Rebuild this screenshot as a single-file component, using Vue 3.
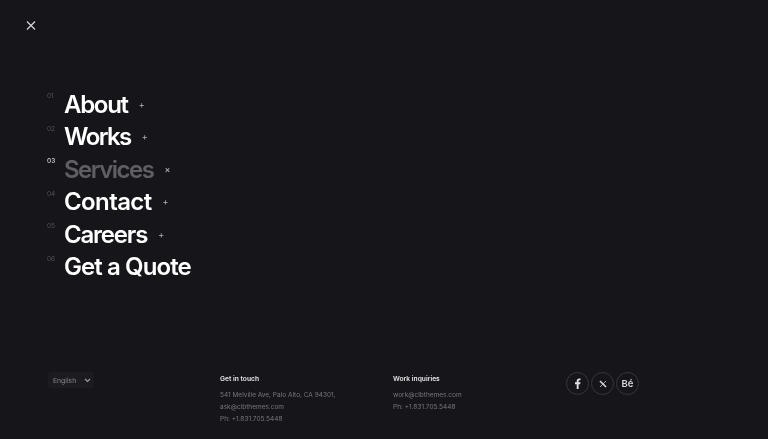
<script setup>
// track: the reference face is narrower on some words, so tracking differs per item
const menu = [
  { no: '01', label: 'About', mark: '+', track: -1.3 },
  { no: '02', label: 'Works', mark: '+', track: -1.6 },
  { no: '03', label: 'Services', mark: '×', active: true, track: -1.5 },
  { no: '04', label: 'Contact', mark: '+', track: -0.6 },
  { no: '05', label: 'Careers', mark: '+', track: -1.2 },
  { no: '06', label: 'Get a Quote', track: -0.9 },
]
</script>

<template>
  <div class="page">
    <button class="close" aria-label="Close">
      <svg width="12" height="12" viewBox="0 0 12 12"><path d="M2 1.500l8 8M10 1.500l-8 8" stroke="#d6d6d8" stroke-width="1.2" fill="none" /></svg>
    </button>

    <ul class="menu">
      <li v-for="item in menu" :key="item.no" class="item" :class="{ active: item.active }">
        <span class="no">{{ item.no }}</span>
        <span class="label" :style="{ letterSpacing: item.track + 'px' }">{{ item.label }}</span>
        <span v-if="item.mark" class="mark">{{ item.mark }}</span>
      </li>
    </ul>

    <footer class="foot">
      <div class="col-lang">
        <div class="lang">
          <span>English</span>
          <svg width="7" height="5" viewBox="0 0 7 5"><path d="M1 1l2.500 2.500L6 1" stroke="#a0a0a4" stroke-width="1.1" fill="none" /></svg>
        </div>
      </div>
      <div class="col">
        <h4>Get in touch</h4>
        <p>541 Melville Ave, Palo Alto, CA 94301,</p>
        <p>ask@clbthemes.com</p>
        <p>Ph: +1.831.705.5448</p>
      </div>
      <div class="col">
        <h4>Work inquiries</h4>
        <p>work@clbthemes.com</p>
        <p>Ph: +1.831.705.5448</p>
      </div>
      <div class="social">
        <span class="circle">
          <svg width="11" height="11" viewBox="0 0 11 11"><path d="M6.600 11V6.200h1.600l.3-1.900H6.600V3.200c0-.6.2-.9 1-.9h.9V.6C8.300.5 7.800.5 7.200.5 5.700.5 4.700 1.400 4.700 3v1.300H3v1.900h1.700V11z" fill="#e2e2e4" /></svg>
        </span>
        <span class="circle">
          <svg width="8" height="8" viewBox="0 0 8 8"><path d="M1 1l6 6" stroke="#d0d0d2" stroke-width="1.700" fill="none" /><path d="M7 1L1 7" stroke="#d0d0d2" stroke-width=".8" fill="none" /></svg>
        </span>
        <span class="circle be">Bé</span>
      </div>
    </footer>
  </div>
</template>

<style>
body { margin: 0; background: #15151a; }
</style>

<style scoped>
.page {
  width: 768px;
  height: 439px;
  box-sizing: border-box;
  background: #15151a;
  font-family: Inter, "Liberation Sans", sans-serif;
  overflow: hidden;
  padding: 20px 47px 0;
  display: flex;
  flex-direction: column;
  filter: blur(0.45px);
}
.close {
  margin-left: -22px;
  width: 12px;
  height: 12px;
  padding: 0;
  border: 0;
  background: none;
  display: block;
}
.close svg { display: block; }
.menu {
  list-style: none;
  margin: 56px 0 0;
  padding: 0;
}
.item {
  display: flex;
  height: 32.500px;
  align-items: center;
}
.no {
  width: 17px;
  font-size: 6.500px;
  color: #55555a;
  align-self: flex-start;
  margin-top: 4px;
}
.active .no { color: #d8d8da; font-weight: 500; }
.label {
  font-size: 24px;
  font-weight: 600;
  color: #fff;
}
.active .label { color: #5f5f63; }
.mark {
  font-size: 9px;
  color: #b4b4b8;
  margin-left: 11px;
}
.active .mark { margin-left: 11px; color: #c8c8cc; }
.foot {
  margin-top: auto;
  height: 65px;
  display: flex;
  align-items: flex-start;
}
.col-lang { width: 173px; }
.lang {
  width: 46px;
  height: 16px;
  margin: -2px 0 0 1px;
  box-sizing: border-box;
  padding: 0 3px 0 5px;
  border-radius: 4px;
  background: #1b1b20;
  display: flex;
  align-items: center;
  justify-content: space-between;
  font-size: 6.800px;
  color: #8a8a8e;
}
.col { width: 173px; }
h4 {
  margin: 0 0 5px;
  font-size: 6.700px;
  line-height: 10px;
  font-weight: 600;
  color: #e6e6e8;
}
p {
  margin: 0;
  font-size: 6.500px;
  line-height: 12px;
  color: #77777b;
}
.social {
  display: flex;
  gap: 2px;
  margin-top: -2px;
}
.circle {
  width: 23px;
  height: 23px;
  box-sizing: border-box;
  border: 1px solid #38383c;
  border-radius: 50%;
  display: flex;
  align-items: center;
  justify-content: center;
}
.be {
  font-size: 9.500px;
  font-weight: 600;
  color: #d8d8da;
}
</style>
